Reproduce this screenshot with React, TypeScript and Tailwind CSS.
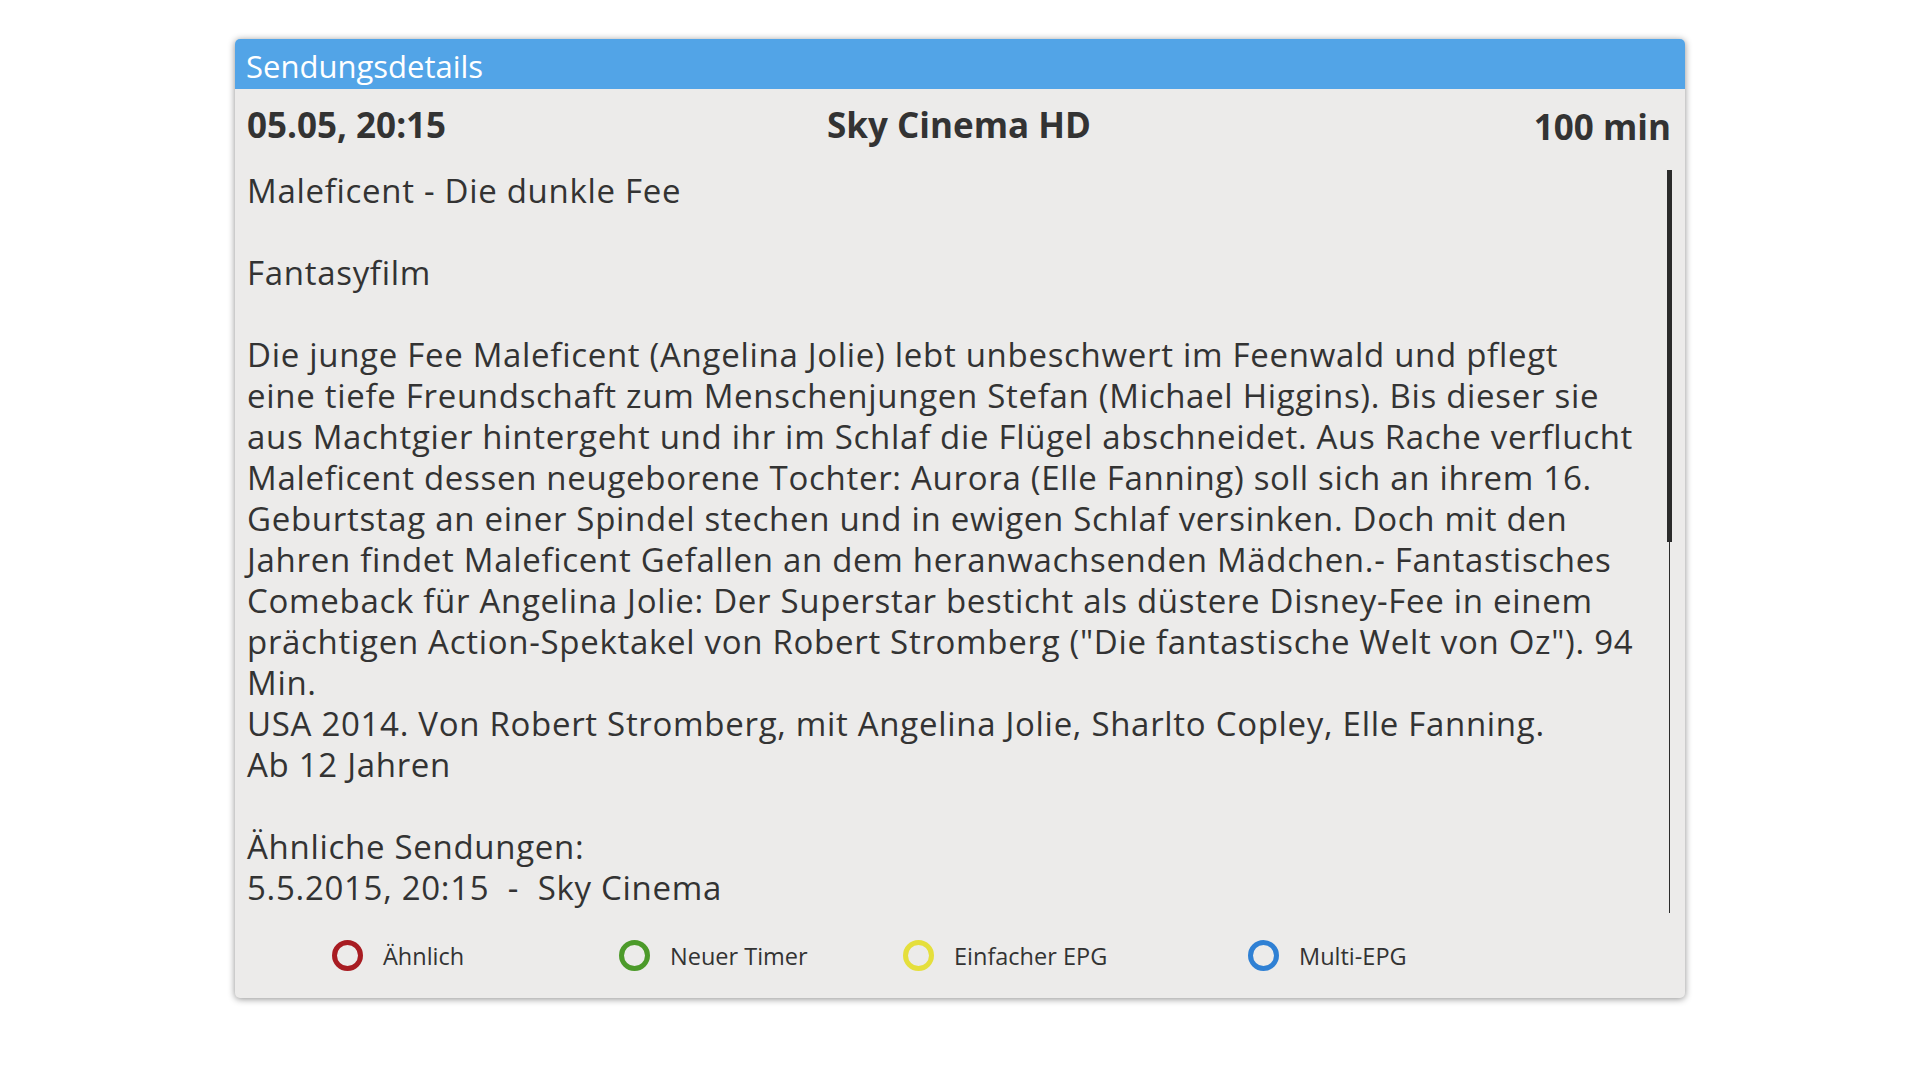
const bodyLines: string[] = [
  "Maleficent - Die dunkle Fee",
  "",
  "Fantasyfilm",
  "",
  "Die junge Fee Maleficent (Angelina Jolie) lebt unbeschwert im Feenwald und pflegt",
  "eine tiefe Freundschaft zum Menschenjungen Stefan (Michael Higgins). Bis dieser sie",
  "aus Machtgier hintergeht und ihr im Schlaf die Flügel abschneidet. Aus Rache verflucht",
  "Maleficent dessen neugeborene Tochter: Aurora (Elle Fanning) soll sich an ihrem 16.",
  "Geburtstag an einer Spindel stechen und in ewigen Schlaf versinken. Doch mit den",
  "Jahren findet Maleficent Gefallen an dem heranwachsenden Mädchen.- Fantastisches",
  "Comeback für Angelina Jolie: Der Superstar besticht als düstere Disney-Fee in einem",
  "prächtigen Action-Spektakel von Robert Stromberg (\"Die fantastische Welt von Oz\"). 94",
  "Min.",
  "USA 2014. Von Robert Stromberg, mit Angelina Jolie, Sharlto Copley, Elle Fanning.",
  "Ab 12 Jahren",
  "",
  "Ähnliche Sendungen:",
  "5.5.2015, 20:15\u00a0 -\u00a0 Sky Cinema",
];

const actions = [
  { label: "Ähnlich", ring: "border-[#a81c22]", width: "w-[287px]" },
  { label: "Neuer Timer", ring: "border-[#4c9a2a]", width: "w-[284px]" },
  { label: "Einfacher EPG", ring: "border-[#e5df3c]", width: "w-[345px]" },
  { label: "Multi-EPG", ring: "border-[#2f80d4]", width: "w-[200px]" },
];

export default function App() {
  return (
    <div
      className="w-[1920px] h-[1080px] bg-white overflow-hidden pt-[39px] pl-[235px]"
      style={{ fontFamily: '"Open Sans", "Noto Sans", sans-serif' }}
    >
      <div className="w-[1450px] h-[959px] flex flex-col bg-[#ecebea] rounded-[5px] overflow-hidden shadow-[0_1px_7px_rgba(0,0,0,0.45)]">
        {/* Title bar */}
        <div className="h-[50px] shrink-0 bg-[#52a4e7] flex items-center px-[11px] pt-[4px]">
          <span className="text-[31px] leading-none text-white">Sendungsdetails</span>
        </div>

        {/* Time / channel / duration */}
        <div className="h-[81px] shrink-0 grid grid-cols-3 items-center px-[12px] pr-[14px] pb-[10px] text-[#333333] font-bold text-[35px] leading-none">
          <span>05.05, 20:15</span>
          <span className="text-center">Sky Cinema HD</span>
          <span className="text-right pt-[4px]">100 min</span>
        </div>

        {/* Description + scrollbar */}
        <div className="h-[743px] shrink-0 flex">
          <div className="flex-1 pl-[12px] text-[33px] leading-[41px] tracking-[0.7px] text-[#333333]">
            {bodyLines.map((line, i) => (
              <div key={i} className="h-[41px] whitespace-nowrap">
                {line}
              </div>
            ))}
          </div>
          <div className="w-[5px] mr-[13px] flex flex-col items-center">
            <div className="w-[5px] h-[372px] bg-[#2b2b2b]" />
            <div className="w-px flex-1 bg-[#2b2b2b]" />
          </div>
        </div>

        {/* Colour key actions */}
        <div className="flex-1 flex items-center pl-[97px]">
          {actions.map((a) => (
            <div key={a.label} className={`${a.width} flex items-center gap-[20px]`}>
              <div className={`w-[31px] h-[31px] rounded-full border-[5px] ${a.ring}`} />
              <span className="text-[23.5px] leading-none text-[#333333] pt-[2px]">{a.label}</span>
            </div>
          ))}
        </div>
      </div>
    </div>
  );
}
